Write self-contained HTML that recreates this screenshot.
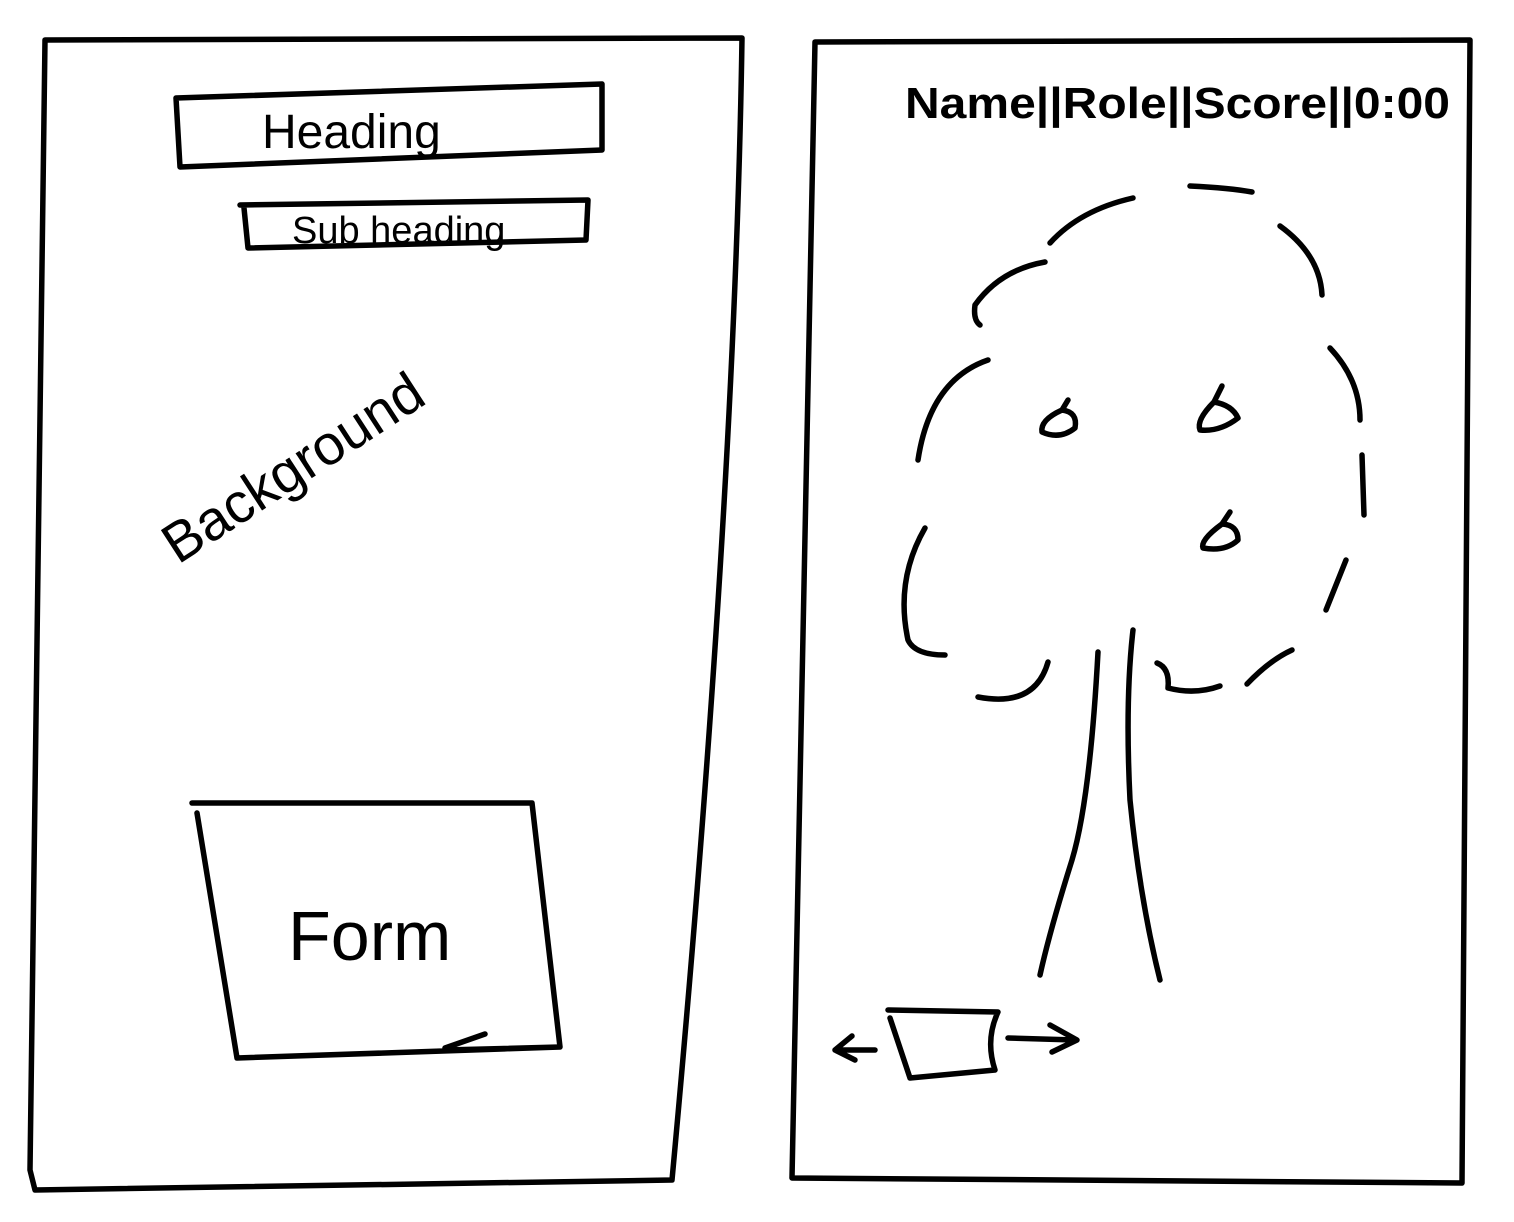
<!DOCTYPE html>
<html><head><meta charset="utf-8"><style>
html,body{margin:0;padding:0;background:#fff;width:1514px;height:1222px;overflow:hidden}
svg{display:block}
text{font-family:"Liberation Sans",sans-serif;fill:#000}
</style></head><body>
<svg width="1514" height="1222" viewBox="0 0 1514 1222" xmlns="http://www.w3.org/2000/svg">
<g fill="none" stroke="#000" stroke-width="5.5" stroke-linecap="round" stroke-linejoin="round">
<!-- left frame -->
<path d="M45 40 L742 38 Q735 500 672 1180 L35 1190 L30 1170 L45 40"/>
<!-- heading box -->
<path d="M176 98 L602 84 L602 150 L180 167 Z"/>
<!-- subheading box -->
<path d="M240 205 L588 200 L586 240 L248 248 L244 208"/>
<!-- form box -->
<path d="M192 803 L532 803 L560 1047 L445 1050 M485 1034 L445 1048 M560 1047 L237 1058 L197 813"/>
<!-- right frame -->
<path d="M815 42 L1470 40 L1462 1183 L792 1178 L815 42"/>
<!-- tree crown dashes -->
<path d="M1050 243 Q1080 210 1133 198"/>
<path d="M1190 186 Q1230 188 1252 192"/>
<path d="M1280 226 Q1320 255 1322 295"/>
<path d="M1045 262 Q1000 270 975 305 Q973 320 980 325"/>
<path d="M988 360 Q930 380 918 460"/>
<path d="M1330 348 Q1360 380 1360 420"/>
<path d="M1362 455 L1364 515"/>
<path d="M1346 560 L1326 610"/>
<path d="M925 528 Q895 580 908 640 Q915 655 945 655"/>
<path d="M978 697 Q1035 708 1048 662"/>
<path d="M1157 663 Q1170 668 1168 688 Q1195 695 1220 686"/>
<path d="M1247 684 Q1270 660 1292 650"/>
<!-- trunk -->
<path d="M1098 652 Q1090 800 1072 860 Q1050 930 1040 975"/>
<path d="M1133 630 Q1125 700 1130 800 Q1140 900 1160 980"/>
<!-- apples -->
<path d="M1068 400 L1062 410 Q1040 420 1042 432 Q1060 440 1075 428 Q1078 412 1062 410"/>
<path d="M1222 386 L1214 402 Q1196 420 1200 430 Q1220 432 1238 418 Q1232 405 1214 402"/>
<path d="M1230 512 L1222 524 Q1200 540 1203 548 Q1225 552 1238 540 Q1238 525 1222 524"/>
<!-- basket -->
<path d="M888 1010 L998 1012 Q985 1040 995 1070 L910 1078 L890 1018"/>
<!-- arrows -->
<path d="M835 1050 L875 1050 M852 1036 L835 1050 L855 1060"/>
<path d="M1008 1038 L1075 1040 M1050 1025 L1077 1040 L1052 1052"/>
</g>
<text x="262" y="148" font-size="48">Heading</text>
<text x="292" y="243" font-size="38">Sub heading</text>
<text x="178" y="565" font-size="56" transform="rotate(-33 178 565)">Background</text>
<text x="288" y="960" font-size="70">Form</text>
<text x="905" y="118" font-size="44" font-weight="bold" textLength="545" lengthAdjust="spacingAndGlyphs">Name||Role||Score||0:00</text>
</svg>
</body></html>
